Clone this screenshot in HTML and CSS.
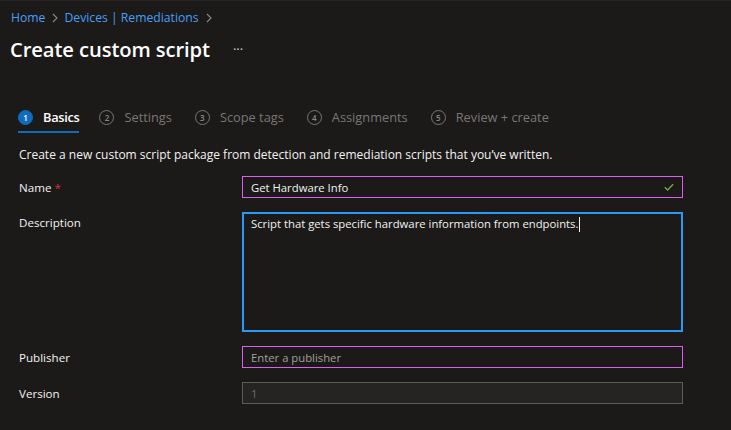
FILE: index.html
```html
<!DOCTYPE html>
<html lang="en">
<head>
<meta charset="utf-8">
<title>Create custom script</title>
<link rel="stylesheet" href="styles.css">
</head>
<body>
<div class="page">
  <nav class="crumbs">
    <a class="crumb">Home</a>
    <svg class="chev" width="8" height="10" viewBox="0 0 8 10"><path d="M2 1l4 4-4 4" fill="none" stroke="#8a8886" stroke-width="1.1"/></svg>
    <a class="crumb">Devices | Remediations</a>
    <svg class="chev" width="8" height="10" viewBox="0 0 8 10"><path d="M2 1l4 4-4 4" fill="none" stroke="#8a8886" stroke-width="1.1"/></svg>
  </nav>
  <header class="title-row">
    <h1 class="title">Create custom script</h1>
    <span class="more">···</span>
  </header>
  <div class="steps">
    <div class="step active"><span class="num">1</span><span class="label">Basics</span></div>
    <div class="step"><span class="num">2</span><span class="label">Settings</span></div>
    <div class="step"><span class="num">3</span><span class="label">Scope tags</span></div>
    <div class="step"><span class="num">4</span><span class="label">Assignments</span></div>
    <div class="step"><span class="num">5</span><span class="label">Review + create</span></div>
  </div>
  <p class="intro">Create a new custom script package from detection and remediation scripts that you’ve written.</p>
  <div class="form">
    <label class="lbl">Name<span class="req">*</span></label>
    <div class="field pink">
      <span class="val">Get Hardware Info</span>
      <svg class="check" width="10" height="8" viewBox="0 0 10 8"><path d="M0.8 4.2l2.8 2.8L9.2 1.2" fill="none" stroke="#7fa63b" stroke-width="1.3"/></svg>
    </div>
    <label class="lbl lbl-top">Description</label>
    <div class="area"><span class="val">Script that gets specific hardware information from endpoints.</span><span class="caret"></span></div>
    <label class="lbl">Publisher</label>
    <div class="field pink"><span class="ph">Enter a publisher</span></div>
    <label class="lbl">Version</label>
    <div class="field disabled"><span class="dis">1</span></div>
  </div>
</div>
</body>
</html>
```

FILE: styles.css
```css
html, body {
  margin: 0;
  padding: 0;
  background: #1b1a19;
  width: 731px;
  height: 430px;
  overflow: hidden;
}
.page {
  font-family: "Open Sans", "Noto Sans", sans-serif;
  color: #f3f2f1;
  font-size: 12px;
  border-top: 1px solid #252423;
}
.crumbs {
  display: flex;
  align-items: center;
  padding: 8px 0 0 11px;
  height: 17px;
  line-height: 17px;
  font-size: 12.2px;
}
.crumb {
  color: #479ef5;
}
.chev {
  margin: 0 5px 0 6px;
}
.title-row {
  display: flex;
  align-items: center;
  margin-top: 9px;
  padding-left: 10px;
  height: 28px;
}
.title {
  margin: 0;
  font-size: 20.2px;
  font-weight: 600;
  line-height: 28px;
  color: #ffffff;
  letter-spacing: -0.1px;
}
.more {
  margin-left: 23px;
  font-size: 13px;
  color: #d0d0d0;
  line-height: 28px;
}
.steps {
  display: flex;
  margin-top: 44px;
  padding-left: 18px;
}
.step {
  display: flex;
  align-items: center;
  height: 20px;
  padding-bottom: 4px;
  border-bottom: 2px solid transparent;
  margin-right: 23px;
  color: #797775;
  font-size: 12.8px;
}
.step .num {
  width: 13px;
  height: 13px;
  border: 1px solid #797775;
  border-radius: 50%;
  display: flex;
  align-items: center;
  justify-content: center;
  font-size: 8px;
  font-weight: 600;
  color: #8a8886;
  margin-right: 10px;
}
.step.active {
  border-bottom-color: #0f6cbd;
  color: #ffffff;
  margin-right: 20px;
}
.step.active .num {
  background: #0f6cbd;
  border-color: #0f6cbd;
  color: #ffffff;
}
.step.active .label {
  font-weight: 600;
  letter-spacing: -0.3px;
}
.intro {
  margin: 14px 0 0 19px;
  line-height: 16px;
  font-size: 12px;
  color: #f3f2f1;
}
.form {
  display: grid;
  grid-template-columns: 223px 441px;
  row-gap: 14px;
  margin: 13px 0 0 19px;
}
.lbl {
  display: flex;
  align-items: center;
  font-size: 11.6px;
  color: #f3f2f1;
}
.lbl-top {
  align-items: flex-start;
  padding-top: 3px;
}
.req {
  color: #d13438;
  margin-left: 3px;
}
.field {
  height: 22px;
  box-sizing: border-box;
  display: flex;
  align-items: center;
  padding: 0 8px;
  font-size: 11.3px;
}
.pink {
  border: 1px solid #dc5ff0;
}
.check {
  margin-left: auto;
  margin-right: 0;
}
.area {
  height: 120px;
  box-sizing: border-box;
  border: 2px solid #2899f5;
  padding: 2px 7px;
  font-size: 11.3px;
  line-height: 16px;
  display: flex;
  align-items: flex-start;
}
.caret {
  display: inline-block;
  width: 1px;
  height: 15px;
  background: #f3f2f1;
  margin-left: 1px;
  margin-top: 1px;
}
.val {
  color: #f3f2f1;
}
.ph {
  color: #a19f9d;
}
.disabled {
  background: #252423;
  border: 1px solid #5c5b59;
}
.dis {
  color: #6f6e6c;
}
```
